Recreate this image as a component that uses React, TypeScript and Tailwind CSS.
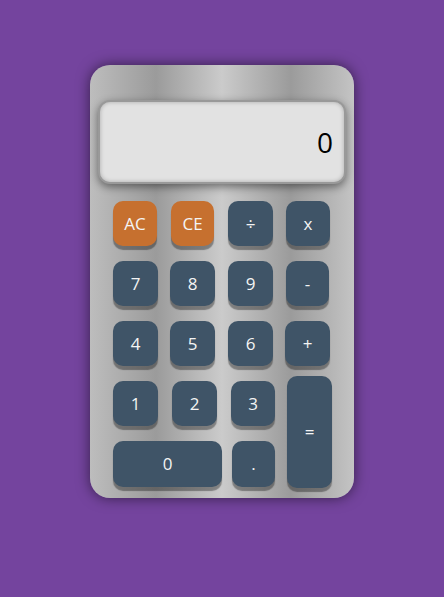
import React from "react";

const btn =
  "flex items-center justify-center rounded-[10px] text-[17px] text-[#f4f4f4] shadow-[0_4px_1px_rgba(0,0,0,0.35)]";
const dark = "bg-[#3f5467]";
const orange = "bg-[#c6702f]";

export default function App() {
  return (
    <div
      className="min-h-[597px] w-full bg-[#74449e] flex justify-center pt-[65px]"
      style={{ fontFamily: '"Open Sans", "Noto Sans", sans-serif' }}
    >
      <div className="w-[264px] h-[433px] rounded-[20px] bg-[linear-gradient(to_right,#bdbdbd_0%,#9b9b9b_25%,#cbcbcb_50%,#9b9b9b_76%,#c4c4c4_100%)] shadow-[0_0_14px_rgba(0,0,0,0.55)] flex flex-col">
        <div className="mx-[8px] mt-[35px] h-[84px] rounded-[12px] bg-[#e2e2e2] border-2 border-[#999999] shadow-[0_3px_8px_rgba(0,0,0,0.45),inset_0_0_4px_rgba(0,0,0,0.25)] flex items-center justify-end pr-[11px]">
          <span className="text-[28px] text-black leading-none">0</span>
        </div>
        <div className="mt-[17px] pl-[23px] flex flex-col">
          <div className="flex h-[45px]">
            <div className={`${btn} ${orange} w-[44px]`}>AC</div>
            <div className={`${btn} ${orange} w-[43px] ml-[14px]`}>CE</div>
            <div className={`${btn} ${dark} w-[45px] ml-[14px]`}>÷</div>
            <div className={`${btn} ${dark} w-[44px] ml-[13px]`}>x</div>
          </div>
          <div className="flex h-[45px] mt-[15px]">
            <div className={`${btn} ${dark} w-[45px]`}>7</div>
            <div className={`${btn} ${dark} w-[45px] ml-[12px]`}>8</div>
            <div className={`${btn} ${dark} w-[45px] ml-[13px]`}>9</div>
            <div className={`${btn} ${dark} w-[43px] ml-[13px]`}>-</div>
          </div>
          <div className="flex h-[45px] mt-[15px]">
            <div className={`${btn} ${dark} w-[45px]`}>4</div>
            <div className={`${btn} ${dark} w-[45px] ml-[12px]`}>5</div>
            <div className={`${btn} ${dark} w-[45px] ml-[13px]`}>6</div>
            <div className={`${btn} ${dark} w-[45px] ml-[12px]`}>+</div>
          </div>
          <div className="flex mt-[10px]">
            <div className="flex flex-col pt-[5px]">
              <div className="flex h-[45px]">
                <div className={`${btn} ${dark} w-[45px]`}>1</div>
                <div className={`${btn} ${dark} w-[45px] ml-[14px]`}>2</div>
                <div className={`${btn} ${dark} w-[44px] ml-[14px]`}>3</div>
              </div>
              <div className="flex h-[46px] mt-[15px]">
                <div className={`${btn} ${dark} w-[109px]`}>0</div>
                <div className={`${btn} ${dark} w-[43px] ml-[10px]`}>.</div>
              </div>
            </div>
            <div className={`${btn} ${dark} w-[45px] h-[112px] ml-[12px]`}>=</div>
          </div>
        </div>
      </div>
    </div>
  );
}
